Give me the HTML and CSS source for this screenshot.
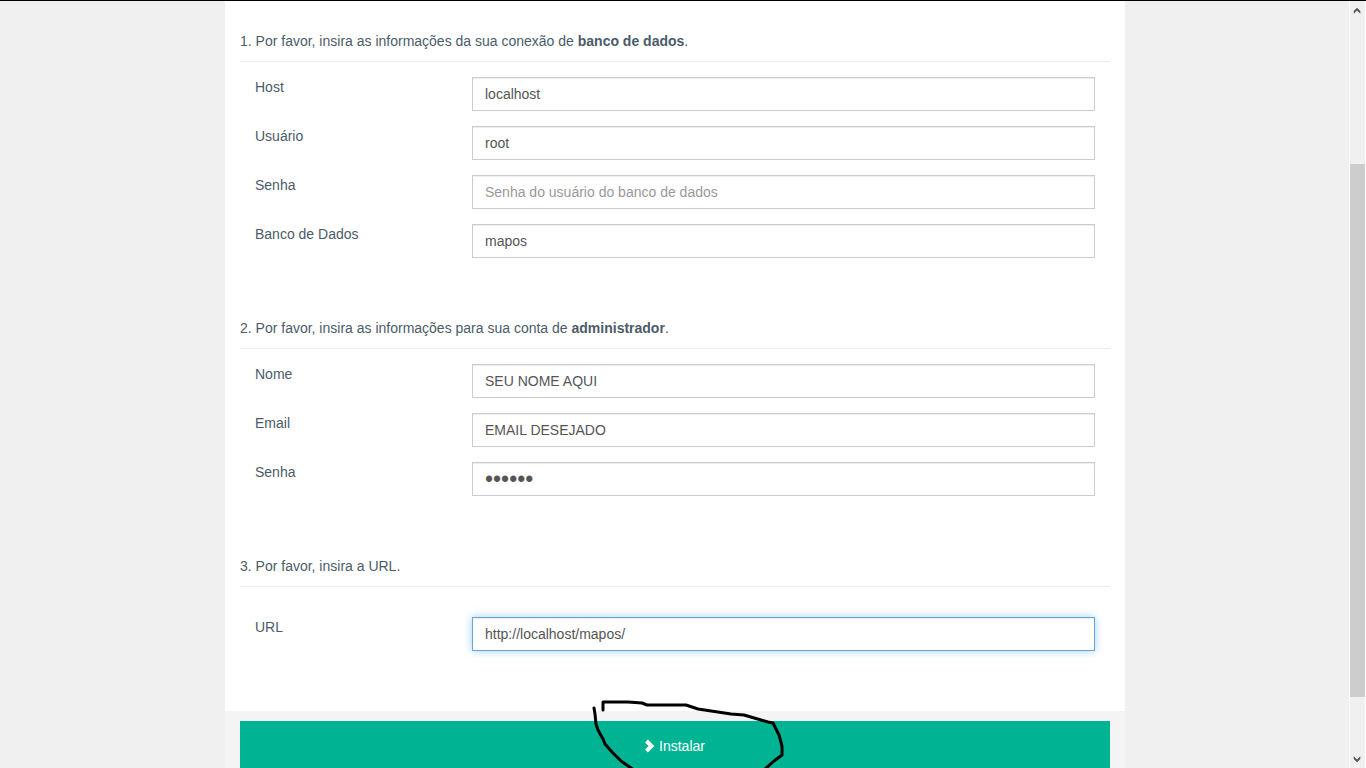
FILE: index.html
```html
<!DOCTYPE html>
<html lang="pt-BR">
<head>
<meta charset="utf-8">
<meta name="viewport" content="width=device-width, initial-scale=1">
<title>Instalação</title>
<link rel="stylesheet" href="styles.css">
</head>
<body>
<main class="page">
  <form class="installer">
    <div class="steps">
      <section class="step">
        <p class="step-title">1. Por favor, insira as informações da sua conexão de <strong>banco de dados</strong>.</p>
        <div class="fields">
          <div class="field"><label for="host">Host</label><input id="host" type="text" value="localhost"></div>
          <div class="field"><label for="dbuser">Usuário</label><input id="dbuser" type="text" value="root"></div>
          <div class="field"><label for="dbpassword">Senha</label><input id="dbpassword" type="password" placeholder="Senha do usuário do banco de dados"></div>
          <div class="field"><label for="dbname">Banco de Dados</label><input id="dbname" type="text" value="mapos"></div>
        </div>
      </section>
      <section class="step">
        <p class="step-title">2. Por favor, insira as informações para sua conta de <strong>administrador</strong>.</p>
        <div class="fields">
          <div class="field"><label for="name">Nome</label><input id="name" type="text" value="SEU NOME AQUI"></div>
          <div class="field"><label for="email">Email</label><input id="email" type="text" value="EMAIL DESEJADO"></div>
          <div class="field"><label for="password">Senha</label><input id="password" class="secret" type="password" value="123456"></div>
        </div>
      </section>
      <section class="step">
        <p class="step-title">3. Por favor, insira a URL.</p>
        <div class="fields fields-spaced">
          <div class="field"><label for="url">URL</label><input id="url" class="active" type="text" value="http://localhost/mapos/"></div>
        </div>
      </section>
    </div>
    <div class="footer">
      <button class="install" type="submit">
        <svg class="chevron" viewBox="0 0 10 14" aria-hidden="true"><path d="M1.500 2 6.500 7 1.500 12" fill="none" stroke="currentColor" stroke-width="4"/></svg>
        <span>Instalar</span>
      </button>
      <svg class="marker" viewBox="0 0 200 80" aria-hidden="true">
        <g fill="none" stroke="#000" stroke-width="3" stroke-linecap="round" stroke-linejoin="round">
          <path d="M13 20V12L38 12 52 13 57 15 96 15 108 19 141 24 154 25 178 32 183 33 186 39 189 45 192 56 192 65 184 71 174 80"/>
          <path d="M4 18 5 24 6 34 8 40 13 49 15 54 22 62 31 71 44 80"/>
        </g>
      </svg>
    </div>
  </form>
</main>
<div class="scrollbar" aria-hidden="true">
  <svg class="arrow" viewBox="0 0 16 18"><path d="M4 13V10L7.500 6.500 11 10V13L7.500 9.500Z" fill="#555"/></svg>
  <div class="track"><div class="thumb"></div></div>
  <svg class="arrow" viewBox="0 0 16 18"><path d="M4 6V9L7.500 12.500 11 9V6L7.500 9.500Z" fill="#555"/></svg>
</div>
</body>
</html>
```
FILE: styles.css
```css
* { box-sizing: border-box; }

body {
  margin: 0;
  height: 100vh;
  overflow: hidden;
  display: flex;
  border-top: 1px solid #000;
  background: #f0f0f0;
  color: #4b5b69;
  font: 14px/20px "Liberation Sans", Arial, sans-serif;
}

.page {
  flex: 1;
  min-width: 0;
}

.installer {
  max-width: 900px;
  margin: 0 auto;
  background: #f4f4f4;
}

.steps {
  display: flex;
  flex-direction: column;
  gap: 60px;
  padding: 30px 15px 60px;
  background: #fff;
}

.step-title {
  margin: 0;
  padding-bottom: 10px;
  border-bottom: 1px solid #eee;
}

.fields {
  display: flex;
  flex-direction: column;
  gap: 15px;
  padding: 15px 15px 0;
}

.fields-spaced { padding-top: 30px; }

.field {
  display: grid;
  grid-template-columns: 217px 1fr;
  align-items: start;
}

input {
  width: 100%;
  height: 34px;
  padding: 6px 12px;
  border: 1px solid #ccc;
  border-radius: 0;
  outline: 0;
  background: #fff;
  box-shadow: inset 0 1px 1px rgba(0, 0, 0, .075);
  color: #555;
  font: inherit;
}

input::placeholder { color: #999; }

.secret { font-size: 23px; }

input.active,
input:focus {
  border-color: #66a5dc;
  box-shadow: inset 0 1px 1px rgba(0, 0, 0, .075), 0 0 8px rgba(102, 175, 233, .6);
}

.footer {
  position: relative;
  padding: 10px 15px;
}

.install {
  display: flex;
  align-items: center;
  justify-content: center;
  gap: 4px;
  width: 100%;
  height: 50px;
  padding: 0;
  border: 0;
  background: #00b393;
  color: #fff;
  font: inherit;
}

.chevron {
  width: 10px;
  height: 14px;
}

/* Hand-drawn circle over the button */
.marker {
  position: absolute;
  top: -21px;
  left: calc(50% - 85px);
  width: 200px;
  height: 80px;
  pointer-events: none;
}

.scrollbar {
  display: flex;
  flex-direction: column;
  width: 17px;
  margin-left: -1px;
  border: solid #fff;
  border-width: 0 1px;
}

.arrow {
  display: block;
  width: 100%;
  height: 18px;
}

.track {
  flex: 1;
  padding-top: 145px;
}

.thumb {
  height: 91%;
  background: #cdcdcd;
}
```
